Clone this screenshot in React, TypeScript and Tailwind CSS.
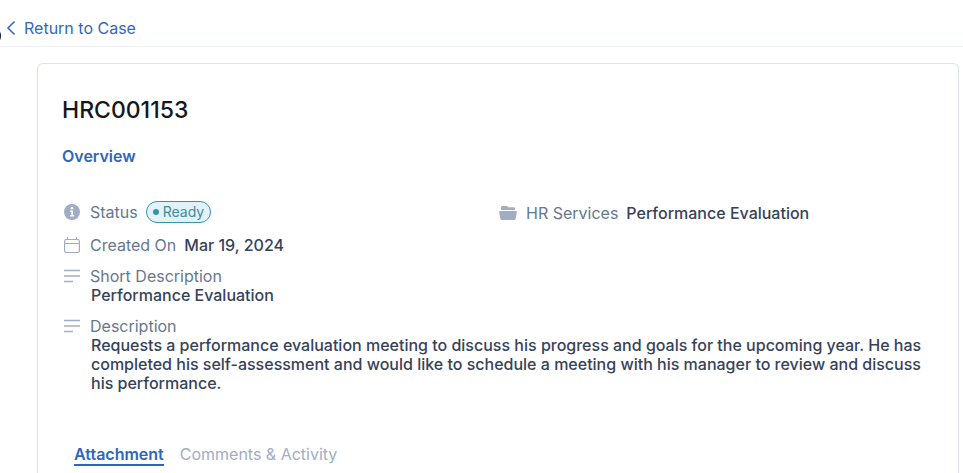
import type { ReactNode } from "react";

function InfoIcon() {
  return (
    <svg viewBox="0 0 16 16" className="size-4" aria-hidden="true">
      <circle cx="8" cy="8" r="8" fill="#a0aec4" />
      <circle cx="8" cy="4.2" r="1.3" fill="#fff" />
      <path d="M6.2 6.6h2.7v4.5h1.2v1.3H6.1v-1.3h1.2V7.9H6.2z" fill="#fff" />
    </svg>
  );
}

function CalendarIcon() {
  return (
    <svg viewBox="0 0 16 17" className="h-[17px] w-4" fill="none" stroke="#a0aec4" strokeWidth="1.2" aria-hidden="true">
      <rect x="0.6" y="2.5" width="14.8" height="13" rx="1.8" />
      <path d="M0.5 6.5h15M3.5 0v3M12.5 0v3" />
    </svg>
  );
}

function LinesIcon() {
  return (
    <svg viewBox="0 0 16 15" className="h-[15px] w-4" fill="none" stroke="#a0aec4" strokeWidth="1.5" aria-hidden="true">
      <path d="M0 1.5h16M0 7h16M0 12.5h9" />
    </svg>
  );
}

function FolderIcon() {
  return (
    <svg viewBox="0 0 18 15" className="h-[15px] w-[18px]" fill="#a0aec4" aria-hidden="true">
      <path d="M2 3.9V1.2Q2 0 3.2 0H7.6Q8.4 0 8.9.8L9.3 1.3H14.8Q16 1.3 16 2.5V3.9Z" />
      <path d="M1 5.1H17Q18 5.1 17.8 6.1L16.7 12.7Q16.5 14 15.2 14H2.8Q1.5 14 1.3 12.7L.2 6.1Q0 5.1 1 5.1Z" />
    </svg>
  );
}

function Field({ icon, label, children }: { icon: ReactNode; label: string; children?: ReactNode }) {
  return (
    <div className="flex items-center gap-2">
      <span className="flex w-5 shrink-0 justify-center">{icon}</span>
      <span className="text-[#66788e]">{label}</span>
      {children}
    </div>
  );
}

export default function App() {
  return (
    <div className="relative flex min-h-screen flex-col overflow-hidden bg-white font-['Inter',sans-serif] text-base leading-[19px] text-[#36425a]">
      <button
        type="button"
        aria-label="Toggle sidebar"
        className="absolute top-[26px] -left-[19px] size-5 rounded-full bg-[#14233c]"
      />
      <header className="ml-px border-b border-[#edf0f4] pt-4 pb-[6px] pl-[5px]">
        <a href="#case" className="inline-flex h-6 items-center gap-2 text-[#3567b8]">
          <svg viewBox="0 0 10 16" className="h-4 w-2.5" fill="none" stroke="#2f66bd" strokeWidth="1.5" aria-hidden="true">
            <path d="M8.5 1.5 2 8l6.5 6.5" />
          </svg>
          Return to Case
        </a>
      </header>

      <main className="mt-4 mr-1 ml-[37px] flex-1 rounded-t-md border border-b-0 border-[#d9e4f2] px-6 pt-[30px]">
        <h1 className="text-[23px] leading-8 font-medium text-[#14171c]">HRC001153</h1>
        <h2 className="mt-[18px] leading-6 font-semibold text-[#2f66bd]">Overview</h2>

        <div className="mt-[33px] grid grid-cols-2 items-end">
          <Field icon={<InfoIcon />} label="Status">
            <span className="flex h-[22px] items-center gap-1 rounded-full border border-[#3396a8] bg-[#e3f2f7] px-1.5 text-sm text-[#3d8d9e]">
              <span className="size-1.5 rounded-full bg-[#3396a8]" />
              Ready
            </span>
          </Field>
          <Field icon={<FolderIcon />} label="HR Services">
            <span className="font-medium">Performance Evaluation</span>
          </Field>
        </div>

        <div className="mt-[13px]">
          <Field icon={<CalendarIcon />} label="Created On">
            <span className="font-medium">Mar 19, 2024</span>
          </Field>
        </div>

        <div className="mt-3">
          <Field icon={<LinesIcon />} label="Short Description" />
          <p className="pl-[29px] font-medium">Performance Evaluation</p>
        </div>

        <div className="mt-3">
          <Field icon={<LinesIcon />} label="Description" />
          <p className="pl-[29px] font-medium">
            Requests a performance evaluation meeting to discuss his progress and goals for the upcoming year. He has
            completed his self-assessment and would like to schedule a meeting with his manager to review and discuss
            his performance.
          </p>
        </div>

        <div role="tablist" className="mt-[52px] flex gap-4 pl-3">
          <button type="button" role="tab" aria-selected="true" className="border-b-2 border-[#2f66bd] font-semibold text-[#2f66bd]">
            Attachment
          </button>
          <button type="button" role="tab" aria-selected="false" className="border-b-2 border-transparent text-[#a0aec4]">
            Comments &amp; Activity
          </button>
        </div>
      </main>
    </div>
  );
}
